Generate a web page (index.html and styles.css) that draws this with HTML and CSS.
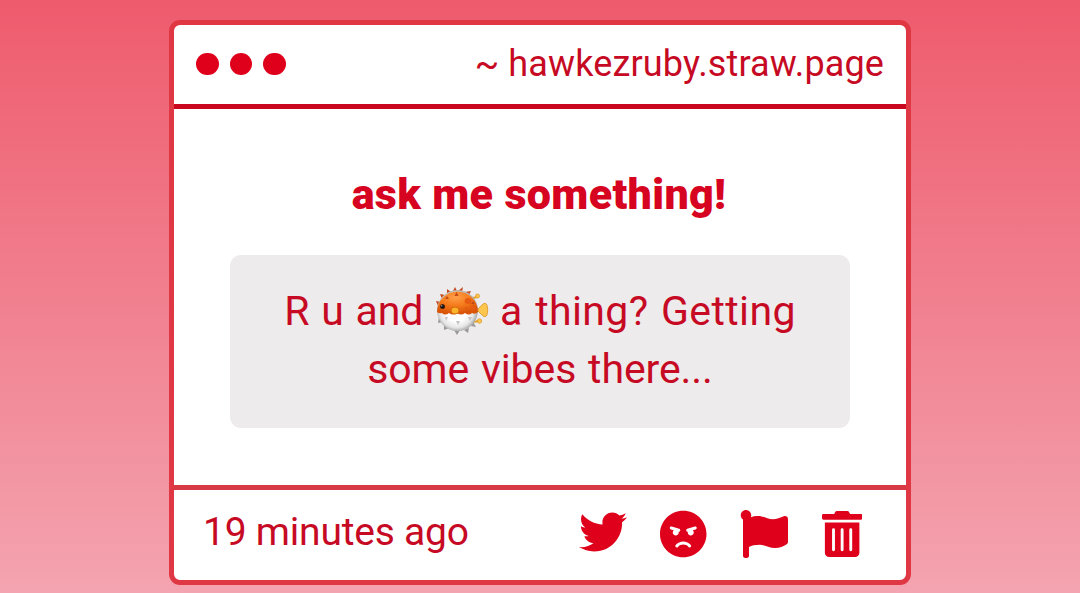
FILE: index.html
```html
<!DOCTYPE html>
<html lang="en">
<head>
  <meta charset="UTF-8">
  <meta name="viewport" content="width=device-width, initial-scale=1.0">
  <title>hawkezruby.straw.page</title>
  <link rel="stylesheet" href="styles.css">
</head>
<body>
  <div class="window">
    <div class="header">
      <div class="dots">
        <span class="dot"></span>
        <span class="dot"></span>
        <span class="dot"></span>
      </div>
      <div class="site">~ hawkezruby.straw.page</div>
    </div>

    <div class="content">
      <h1>ask me something!</h1>
      <p class="message"><span>R u and</span> <svg class="emoji" viewBox="0 0 54 48" role="img" aria-label="blowfish">
          <defs>
            <radialGradient id="skin" cx="0.45" cy="0.25" r="0.7">
              <stop offset="0" stop-color="#ffa04a"/>
              <stop offset="0.5" stop-color="#f57c1c"/>
              <stop offset="1" stop-color="#d95508"/>
            </radialGradient>
            <radialGradient id="belly" cx="0.48" cy="0.5" r="0.52">
              <stop offset="0.5" stop-color="#ffffff"/>
              <stop offset="0.8" stop-color="#e6e6e6"/>
              <stop offset="1" stop-color="#a5a5a5"/>
            </radialGradient>
          </defs>
          <!-- fins -->
          <path d="M43 22l5-5q3-2 4 1 1.500 5 0 10-1 3-4 1l-5-5z" fill="#ffc64d" stroke="#dc9420" stroke-width="0.8"/>
          <path d="M38 11l4-1M39 35l4-1" stroke="#e5a52e" stroke-width="2"/>
          <circle cx="42.500" cy="9" r="2" fill="#ffc64d" stroke="#dc9420" stroke-width="0.7"/>
          <circle cx="44.500" cy="34" r="2.200" fill="#ffc64d" stroke="#dc9420" stroke-width="0.7"/>
          <!-- spikes -->
          <path d="M1 14l5 1-3 4zM5 7l5 1-3 4zM12 2l4 3-4 2zM20 0l2 4-4 0zM28 0l-1 5-4-1zM36 4l-2 4-4-3z" fill="#c6491c"/>
          <path d="M3 36l1-6 4 5zM9 43l0-6 5 4zM22 48l-3-5 6 0zM33 46l-4-3 5-2zM41 40l-5-1 2-4z" fill="#999"/>
          <circle cx="22.500" cy="23.500" r="20.500" fill="url(#belly)"/>
          <path d="M2 25a20.500 20.500 0 1 1 41 0q-3 3-6 1-3 3-7 0-4 3-8 0-4 3-8 0-4 3-7 0-3 1-5-1z" fill="url(#skin)"/>
          <ellipse cx="33" cy="14" rx="3.500" ry="3" fill="#e75b12"/>
          <ellipse cx="38" cy="21" rx="3" ry="2.500" fill="#e75b12"/>
          <circle cx="31" cy="21" r="1.200" fill="#e75b12"/>
          <path d="M12 9l2 3-4 0zM21.500 5l2 4-4 0zM38 14l2 3-4 0z" fill="#c54815"/>
          <path d="M10 30l3 0-2 4zM21 34l4 0-2 4zM33 30l4 0-2 4z" fill="#c4c4c4"/>
          <circle cx="7.500" cy="19.500" r="2.600" fill="#75300c"/>
          <circle cx="7.500" cy="19.500" r="2" fill="#111"/>
          <circle cx="6.800" cy="18.800" r="0.600" fill="#fff"/>
          <ellipse cx="20" cy="23.500" rx="4" ry="3.500" fill="#f8b52c" stroke="#d76b0c" stroke-width="1"/>
        </svg> <span class="wide">a thing? Getting</span> <span>some vibes there...</span></p>
    </div>

    <div class="footer">
      <div class="time">19 minutes ago</div>
      <div class="actions">
        <svg class="icon twitter" viewBox="0 0 512 512"><path d="M459.37 151.716c.325 4.548.325 9.097.325 13.645 0 138.72-105.583 298.558-298.558 298.558-59.452 0-114.68-17.219-161.137-47.106 8.447.974 16.568 1.299 25.34 1.299 49.055 0 94.213-16.568 130.274-44.832-46.132-.975-84.792-31.188-98.112-72.772 6.498.974 12.995 1.624 19.818 1.624 9.421 0 18.843-1.3 27.614-3.573-48.081-9.747-84.143-51.98-84.143-102.985v-1.299c13.969 7.797 30.214 12.67 47.431 13.319-28.264-18.843-46.781-51.005-46.781-87.391 0-19.492 5.197-37.36 14.294-52.954 51.655 63.675 129.3 105.258 216.365 109.807-1.624-7.797-2.599-15.918-2.599-24.04 0-57.828 46.782-104.934 104.934-104.934 30.213 0 57.502 12.67 76.67 33.137 23.715-4.548 46.456-13.32 66.599-25.34-7.798 24.366-24.366 44.833-46.132 57.827 21.117-2.273 41.584-8.122 60.426-16.243-14.292 20.791-32.161 39.308-52.628 54.253z"/></svg>
        <svg class="icon angry" viewBox="0 0 496 512"><path d="M248 8C111 8 0 119 0 256s111 248 248 248 248-111 248-248S385 8 248 8zM136 240c0-9.3 4.1-17.5 10.5-23.4l-31-9.3c-8.5-2.5-13.3-11.5-10.7-19.9 2.5-8.5 11.4-13.2 19.9-10.7l80 24c8.5 2.5 13.3 11.5 10.7 19.9-2.1 6.9-8.4 11.4-15.3 11.4-.5 0-1.1-.2-1.7-.2.7 2.7 1.7 5.3 1.7 8.2 0 17.7-14.3 32-32 32S136 257.7 136 240zm168 154.2c-27.8-33.4-84.2-33.4-112.1 0-13.5 16.3-38.2-4.2-24.6-20.5 20-24 49.4-37.8 80.6-37.8s60.6 13.8 80.6 37.8c13.8 16.5-11.1 36.6-24.5 20.5zm76.6-186.9l-31 9.3c6.3 5.8 10.5 14.1 10.5 23.4 0 17.7-14.3 32-32 32s-32-14.3-32-32c0-2.9.9-5.6 1.7-8.2-.6.1-1.1.2-1.7.2-6.9 0-13.2-4.5-15.3-11.4-2.5-8.5 2.3-17.4 10.7-19.9l80-24c8.4-2.5 17.4 2.3 19.9 10.7 2.5 8.5-2.3 17.4-10.8 19.9z"/></svg>
        <svg class="icon flag" viewBox="0 0 512 512"><path d="M349.565 98.783C295.978 98.783 251.721 64 184.348 64c-24.955 0-47.309 4.384-68.045 12.013a55.947 55.947 0 0 0 3.586-23.562C118.117 24.015 94.806 1.206 66.338.048 34.345-1.254 8 24.296 8 56c0 19.026 9.497 35.825 24 45.945V488c0 13.255 10.745 24 24 24h16c13.255 0 24-10.745 24-24v-94.4c28.311-12.064 63.582-22.122 114.435-22.122 53.588 0 97.844 34.783 165.217 34.783 48.169 0 86.667-16.294 122.505-40.858C506.84 359.452 512 349.571 512 339.045v-243.1c0-23.393-24.269-38.87-45.485-29.016-34.338 15.948-76.454 31.854-116.95 31.854z"/></svg>
        <svg class="icon trash" viewBox="0 0 448 512"><path d="M32 464a48 48 0 0 0 48 48h288a48 48 0 0 0 48-48V128H32zm272-256a16 16 0 0 1 32 0v224a16 16 0 0 1-32 0zm-96 0a16 16 0 0 1 32 0v224a16 16 0 0 1-32 0zm-96 0a16 16 0 0 1 32 0v224a16 16 0 0 1-32 0zM432 32H312l-9.400-18.700A24 24 0 0 0 281.100 0H166.800a23.720 23.720 0 0 0-21.400 13.300L136 32H16A16 16 0 0 0 0 48v32a16 16 0 0 0 16 16h416a16 16 0 0 0 16-16V48a16 16 0 0 0-16-16z"/></svg>
      </div>
    </div>
  </div>
</body>
</html>
```

FILE: styles.css
```css
* {
  box-sizing: border-box;
}
body {
  font-family: Roboto, sans-serif;
  margin: 0;
  padding-top: 20px;
  height: 593px;
  overflow: hidden;
  color: #c70a24;
  background: linear-gradient(#ee5b6d, #f4a4b0);
}
.window {
  display: flex;
  flex-direction: column;
  width: 742px;
  height: 565px;
  margin: 0 auto;
  background-color: white;
  border: 5px solid #df3743;
  border-radius: 11px;
}
.header {
  display: flex;
  justify-content: space-between;
  align-items: center;
  height: 84px;
  padding: 0 22px 1px;
  border-bottom: 5px solid #c90820;
}
.dots {
  display: flex;
  gap: 11px;
}
.dot {
  width: 22.6px;
  height: 22.6px;
  border-radius: 50%;
  background-color: #df001b;
}
.site {
  font-size: 36px;
  letter-spacing: 0.13px;
}
.content {
  flex: 1;
  padding: 56px 56px 0;
  text-align: center;
}
h1 {
  margin: 0 2px 32px 0;
  font-size: 43px;
  font-weight: 900;
  line-height: 58px;
  letter-spacing: 0.35px;
  color: #d60420;
}
.message {
  margin: 0;
  height: 173px;
  padding: 27px 40px;
  font-size: 41px;
  line-height: 58px;
  letter-spacing: -0.1px;
  word-spacing: 1.8px;
  background-color: #eeebec;
  border-radius: 11px;
}
.wide {
  letter-spacing: 0.4px;
}
.emoji {
  width: 54px;
  height: 48px;
  margin: -10px -1px -10px 0;
  vertical-align: 0;
}
.footer {
  display: flex;
  justify-content: space-between;
  align-items: center;
  height: 95px;
  padding: 0 44px 2px 29px;
  border-top: 5px solid #d83a45;
}
.time {
  padding-bottom: 4px;
  font-size: 39px;
  letter-spacing: -0.22px;
}
.actions {
  display: flex;
  align-items: center;
  gap: 33px;
}
.icon {
  height: 48px;
  fill: #df001b;
}
.twitter {
  margin-bottom: 5px;
}
.trash {
  height: 46px;
  margin-left: 1px;
}
```
